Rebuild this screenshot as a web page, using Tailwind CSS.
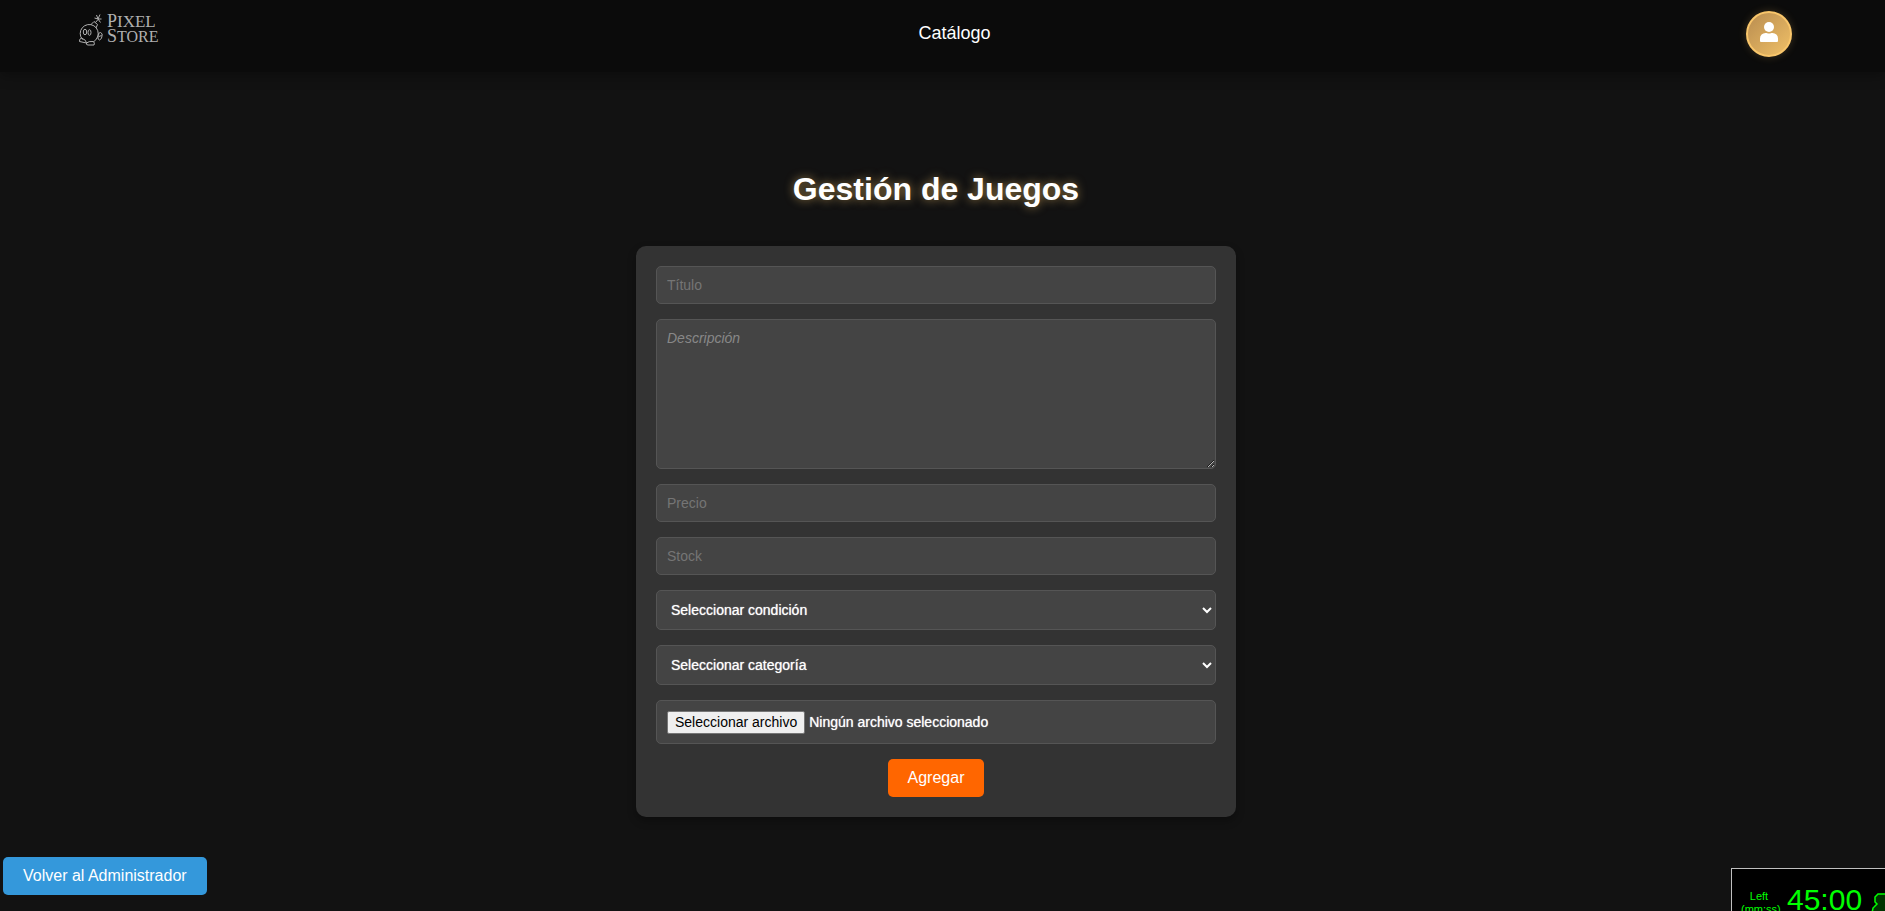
<!DOCTYPE html>
<html lang="es">
<head>
<meta charset="utf-8">
<meta name="viewport" content="width=device-width, initial-scale=1">
<title>Gestión de Juegos</title>
<script src="https://cdn.jsdelivr.net/npm/@tailwindcss/browser@4"></script>
</head>
<body class="min-h-screen overflow-x-hidden bg-[#121212] pr-[13px] font-['Liberation_Sans',Arial,sans-serif] text-white">
  <header class="-mr-[13px] flex h-[72px] items-start justify-between bg-[#0b0b0b] pt-[11px] pr-[93px] pl-[79px] shadow-[0_4px_12px_rgba(0,0,0,0.3)]">
    <a href="#" aria-label="Pixel Store" class="flex w-[84px] items-center gap-1 text-[#b0b0b0]">
      <svg class="h-9 w-6 shrink-0" viewBox="0 0 24 36" fill="none" stroke="currentColor" stroke-width="1" aria-hidden="true">
        <path d="M3.500 28.500A9 9 0 1 1 18.500 26Q17 29.500 14.500 30.800"/>
        <ellipse cx="6" cy="21" rx="1.700" ry="2.800"/>
        <ellipse cx="10.500" cy="21.500" rx="1.500" ry="2.800"/>
        <path d="M11.500 14l3.500-3.500 3.500 3-1.500 3.500M16.500 11.500l2.500-3"/>
        <path d="M19 8l-3.500-1M19 8l-1.500-4M19 8l2-4.500M19 8l3.500 0M19 8l2.500 3.500"/>
        <path d="M2.500 27q-2.500 1-2 3.500l7 1.500q0-3-5-5zM7.500 32q2-2 7-1.500 1.500 1.500.5 3.500H9q-2 0-1.500-2z"/>
        <path d="M19.500 24.500q-.5-3 2-3 2.500 1 1.500 3.500 0 3-2.500 4-2-.5-1.500-3z M20 25.500l2.500-1"/>
      </svg>
      <span class="flex flex-col font-['Liberation_Serif',serif] text-[18px] leading-[15px]"><span>P<span class="text-[17px]">IXEL</span></span><span>S<span class="text-[16px]">TORE</span></span></span>
    </a>
    <nav><a href="#" class="block pt-[11px] text-[18px] leading-[22px]">Catálogo</a></nav>
    <button type="button" aria-label="Cuenta" class="flex size-[46px] items-center justify-center rounded-full border-2 border-[#f9c66b] bg-linear-135 from-[#b98d50] to-[#f0c067] shadow-[0_0_8px_rgba(249,198,107,0.2)]">
      <svg class="mb-1 h-5 w-[18px]" viewBox="0 0 18 20" fill="#fff" aria-hidden="true"><circle cx="9" cy="5" r="5"/><path d="M0 20v-3.500A5.500 5.500 0 0 1 5.500 11c1.500 0 2 .6 3.500.6s2-.6 3.500-.6a5.500 5.500 0 0 1 5.500 5.500V19q0 1-1 1H1q-1 0-1-1z"/></svg>
    </button>
  </header>

  <main class="flex flex-col items-center pt-[99px]">
    <h1 class="mb-[39px] text-[32px] leading-9 font-bold [text-shadow:0_0_10px_rgba(249,198,107,0.6)]">Gestión de Juegos</h1>
    <form class="flex w-full max-w-[600px] flex-col gap-[15px] rounded-[10px] bg-[#333] p-5 text-[14px] shadow-[0_4px_8px_rgba(0,0,0,0.3)]">
      <input type="text" aria-label="Título" placeholder="Título" class="h-[38px] rounded-[5px] border border-[#555] bg-[#444] px-[10px] placeholder:text-[#757575]">
      <textarea aria-label="Descripción" placeholder="Descripción" class="h-[150px] resize-y rounded-[5px] border border-[#555] bg-[#444] p-[10px] leading-4 placeholder:text-[#888] placeholder:italic"></textarea>
      <input type="text" inputmode="decimal" aria-label="Precio" placeholder="Precio" class="h-[38px] rounded-[5px] border border-[#555] bg-[#444] px-[10px] placeholder:text-[#757575]">
      <input type="text" inputmode="numeric" aria-label="Stock" placeholder="Stock" class="h-[38px] rounded-[5px] border border-[#555] bg-[#444] px-[10px] placeholder:text-[#757575]">
      <select aria-label="Condición" class="h-10 rounded-[5px] border border-[#555] bg-[#444] pl-[10px] [text-shadow:0_0_1px_rgba(255,255,255,0.8)]"><option>Seleccionar condición</option></select>
      <select aria-label="Categoría" class="h-10 rounded-[5px] border border-[#555] bg-[#444] pl-[10px] [text-shadow:0_0_1px_rgba(255,255,255,0.8)]"><option>Seleccionar categoría</option></select>
      <label class="flex h-11 items-center gap-1 rounded-[5px] border border-[#555] bg-[#444] px-[10px]">
        <input type="file" class="sr-only">
        <span class="rounded-[2px] border border-[#767676] bg-[#efefef] px-[7px] py-px leading-[19px] text-black">Seleccionar archivo</span>
        <span class="[text-shadow:0_0_1px_rgba(255,255,255,0.8)]">Ningún archivo seleccionado</span>
      </label>
      <button type="submit" class="self-center rounded-[5px] bg-[#ff6600] px-5 py-[10px] text-[16px] leading-[18px]">Agregar</button>
    </form>
  </main>
  <footer class="pt-10 pl-[3px]">
    <a href="#" class="inline-block rounded-[5px] bg-[#3498db] px-5 py-[10px] text-[16px] leading-[18px]">Volver al Administrador</a>
  </footer>

  <aside aria-label="Tiempo restante" class="fixed right-0 bottom-0 flex h-[43px] w-[154px] gap-[10px] overflow-hidden border-t border-l border-[#c0c0c0] bg-black pt-5 pl-[9px] text-[#00ff00]">
    <div class="w-9 shrink-0 pt-px text-center text-[11px] leading-[13px]">Left<br>(mm:ss)</div>
    <div class="shrink-0 text-[30px] leading-[22px]">45:00</div>
    <svg class="-ml-px h-9 w-4 shrink-0 pt-1" viewBox="0 0 16 32" fill="#003300" stroke="currentColor" stroke-width="1.500" aria-hidden="true"><path d="M16 1H7L4 4v5l2 2-4 4-1 5v12h15"/></svg>
  </aside>
</body>
</html>
